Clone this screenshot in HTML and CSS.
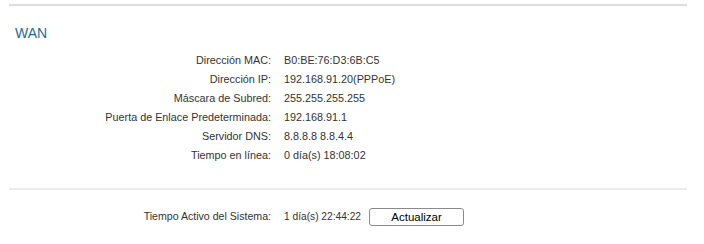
FILE: index.html
```html
<!DOCTYPE html>
<html>
<head>
<meta charset="utf-8">
<link rel="stylesheet" href="styles.css">
</head>
<body>
<div class="page">
  <hr class="rule top">
  <h2 class="title">WAN</h2>
  <div class="info">
    <div class="lbl">Dirección MAC:</div><div class="val">B0:BE:76:D3:6B:C5</div>
    <div class="lbl">Dirección IP:</div><div class="val">192.168.91.20(PPPoE)</div>
    <div class="lbl">Máscara de Subred:</div><div class="val">255.255.255.255</div>
    <div class="lbl">Puerta de Enlace Predeterminada:</div><div class="val">192.168.91.1</div>
    <div class="lbl">Servidor DNS:</div><div class="val">8.8.8.8 8.8.4.4</div>
    <div class="lbl">Tiempo en línea:</div><div class="val">0 día(s) 18:08:02</div>
  </div>
  <hr class="rule bottom">
  <div class="uptime">
    <div class="lbl">Tiempo Activo del Sistema:</div>
    <div class="val up">1 día(s) 22:44:22</div>
    <button class="btn">Actualizar</button>
  </div>
</div>
</body>
</html>
```
FILE: styles.css
```css
html, body { margin: 0; padding: 0; background: #fff; }
.page {
  width: 678px;
  margin-left: 9px;
  padding-top: 4px;
  font-family: "Liberation Sans", Arial, sans-serif;
  font-size: 10.8px;
  color: #333;
}
.rule { border: 0; margin: 0; }
.rule.top { height: 2px; background: #dddddd; }
.rule.bottom { height: 2px; background: #ececec; margin-top: 23px; }
.title {
  margin: 19px 0 0 6px;
  font-weight: normal;
  font-size: 14px;
  line-height: 16px;
  color: #1d6b9a;
}
.info {
  display: grid;
  grid-template-columns: 262px auto;
  column-gap: 13px;
  row-gap: 0;
  margin-top: 10px;
}
.lbl { text-align: right; line-height: 19px; height: 19px; }
.val { line-height: 19px; height: 19px; }
.uptime {
  display: flex;
  align-items: center;
  margin-top: 17px;
  height: 19px;
}
.uptime .lbl { width: 262px; font-size: 10.6px; }
.uptime .up { margin-left: 13px; font-size: 10.2px; }
.btn {
  margin-left: 8px;
  width: 95px;
  height: 18px;
  padding: 0;
  border: 1px solid #8a8a8a;
  border-radius: 3px;
  background: #fff;
  font-family: "Liberation Sans", Arial, sans-serif;
  font-size: 11.5px;
  color: #000;
}
```
